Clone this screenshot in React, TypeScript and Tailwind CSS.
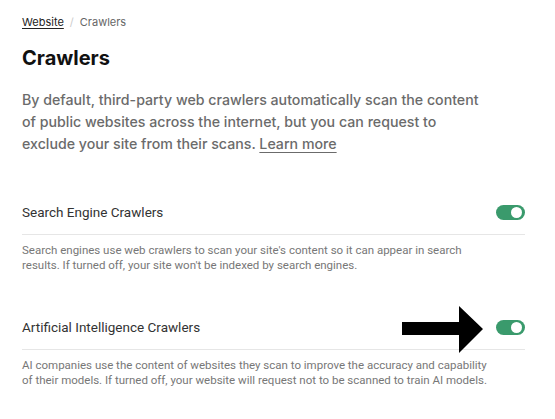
const sections = [
  {
    title: 'Search Engine Crawlers',
    text: "Search engines use web crawlers to scan your site's content so it can appear in search results. If turned off, your site won't be indexed by search engines.",
    arrow: false,
  },
  {
    title: 'Artificial Intelligence Crawlers',
    text: 'AI companies use the content of websites they scan to improve the accuracy and capability of their models. If turned off, your website will request not to be scanned to train AI models.',
    arrow: true,
  },
]

function Toggle() {
  return (
    <span className="relative flex h-[15px] w-[29px] shrink-0 items-center rounded-full bg-[#3a9a6c]">
      <span className="absolute right-[3px] h-[11px] w-[11px] rounded-full bg-white" />
    </span>
  )
}

function Arrow() {
  return (
    <svg className="absolute right-[42px] top-[-12px]" width="81" height="47" viewBox="0 0 81 47" aria-hidden>
      <path d="M0 16 H57 V0 L81 23 L57 47 V29 H0 Z" fill="#000" />
    </svg>
  )
}

export default function App() {
  return (
    <div className="h-[419px] w-[555px] bg-white pl-[22px] pr-[30px] font-['Inter',sans-serif]">
      <nav className="flex h-[28px] items-end gap-[6px] pt-[21px] text-[11px] leading-none">
        <span className="text-[#222] underline underline-offset-2">Website</span>
        <span className="text-[#ccc]">/</span>
        <span className="text-[#666]">Crawlers</span>
      </nav>
      <h1 className="mt-[18px] text-[20px] font-bold leading-[24px] text-[#111]">Crawlers</h1>
      <p className="mt-[19px] w-[462px] text-[14.2px] font-medium leading-[22px] text-[#6b6b6b]">
        By default, third-party web crawlers automatically scan the content of public websites across
        the internet, but you can request to exclude your site from their scans.{' '}
        <span className="underline underline-offset-[3px]">Learn more</span>
      </p>
      <div className="mt-[48px] flex flex-col gap-[45px] font-['Roboto',sans-serif]">
        {sections.map((s) => (
          <section key={s.title}>
            <div className="relative flex items-center justify-between border-b border-[#e6e6e6] pb-[13px]">
              <span className="text-[13.5px] leading-[18px] text-[#333]">{s.title}</span>
              {s.arrow && <Arrow />}
              <Toggle />
            </div>
            <p className="mt-[8px] max-w-[470px] text-[11.5px] leading-[15px] text-[#777]">{s.text}</p>
          </section>
        ))}
      </div>
    </div>
  )
}
